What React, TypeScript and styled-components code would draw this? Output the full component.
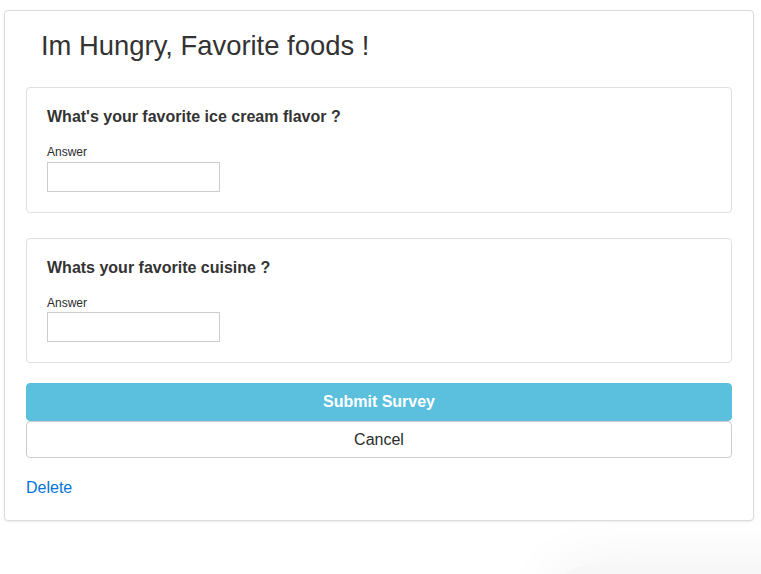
import React from 'react';
import styled, { createGlobalStyle } from 'styled-components';

const GlobalStyle = createGlobalStyle`
  html, body {
    margin: 0;
    padding: 0;
    background: #ffffff;
    font-family: "Liberation Sans", Arial, sans-serif;
    color: #292b2c;
    overflow: hidden;
  }
  * {
    box-sizing: border-box;
  }
`;

const Page = styled.div`
  padding: 10px 0 0 4px;
  height: 574px;
`;

const SurveyCard = styled.div`
  width: 750px;
  border: 1px solid #dcdcdc;
  border-radius: 4px;
  box-shadow: 0 1px 2px rgba(0, 0, 0, 0.08);
  padding: 20px 21px 23px;
  background: #ffffff;
`;

const Title = styled.h3`
  margin: 0 0 26px 15px;
  font-size: 27.4px;
  font-weight: 400;
  line-height: 1.1;
  color: #333333;
`;

const QuestionCard = styled.div`
  border: 1px solid #e0e0e0;
  border-radius: 4px;
  padding: 19px 20px 20px;
  margin-bottom: 25px;
`;

const Question = styled.h5`
  margin: 0 0 19px;
  font-size: 16px;
  font-weight: 700;
  line-height: 1.2;
  color: #333333;
`;

const Label = styled.label`
  display: block;
  font-size: 12px;
  line-height: 1.2;
  margin-bottom: 2px;
  color: #292b2c;
`;

const AnswerInput = styled.input`
  display: block;
  width: 173px;
  height: 30px;
  border: 1px solid #cccccc;
  border-radius: 0;
  padding: 4px 6px;
  font-size: 14px;
  font-family: inherit;
  outline: none;
`;

const Actions = styled.div`
  display: flex;
  flex-direction: column;
  margin-top: -5px;
`;

const Button = styled.button<{ $primary?: boolean }>`
  width: 100%;
  height: ${p => (p.$primary ? '38px' : '37px')};
  border: 1px solid ${p => (p.$primary ? '#5bc0de' : '#cccccc')};
  border-radius: 4px;
  background: ${p => (p.$primary ? '#5bc0de' : '#ffffff')};
  color: ${p => (p.$primary ? '#ffffff' : '#292b2c')};
  font-family: inherit;
  font-size: 16px;
  font-weight: ${p => (p.$primary ? 700 : 400)};
  cursor: pointer;
`;

const DeleteLink = styled.a`
  display: inline-block;
  margin-top: 21px;
  font-size: 16px;
  color: #0275d8;
  text-decoration: none;
`;

const FadeShadow = styled.div`
  position: fixed;
  left: 550px;
  top: 565px;
  width: 420px;
  height: 200px;
  border-radius: 40px;
  box-shadow: 0 0 60px rgba(0, 0, 0, 0.06);
  background: #f7f7f7;
`;

const questions = [
  "What's your favorite ice cream flavor ?",
  'Whats your favorite cuisine ?',
];

const App: React.FC = () => {
  return (
    <Page>
      <GlobalStyle />
      <SurveyCard>
        <Title>Im Hungry, Favorite foods !</Title>
        {questions.map(q => (
          <QuestionCard key={q}>
            <Question>{q}</Question>
            <Label>Answer</Label>
            <AnswerInput type="text" />
          </QuestionCard>
        ))}
        <Actions>
          <Button $primary>Submit Survey</Button>
          <Button>Cancel</Button>
        </Actions>
        <DeleteLink href="#">Delete</DeleteLink>
      </SurveyCard>
      <FadeShadow />
    </Page>
  );
};

export default App;
